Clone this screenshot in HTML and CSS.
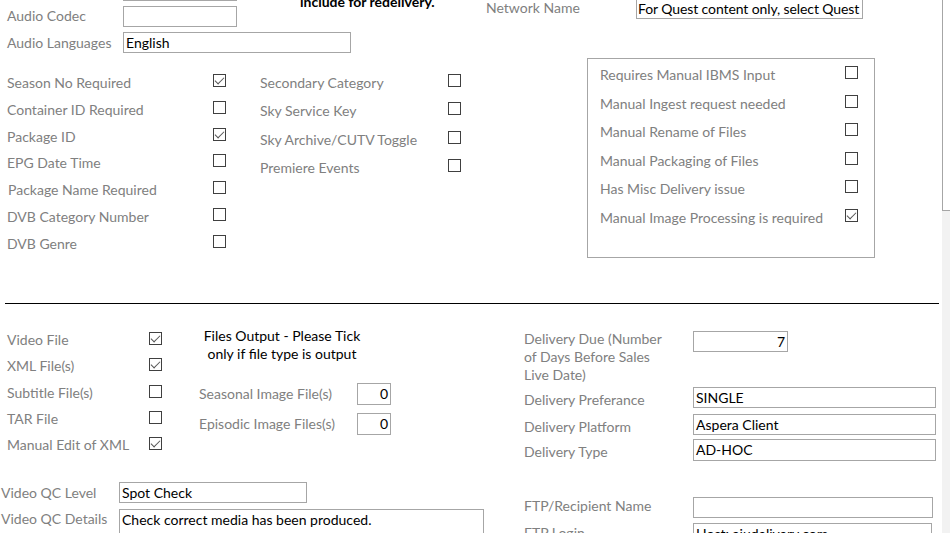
FILE: index.html
```html
<!DOCTYPE html>
<html lang="en">
<head>
    <meta charset="UTF-8">
    <title>Delivery Requirements</title>
    <link rel="stylesheet" href="styles.css">
</head>
<body>
    <div class="form">
        <div class="detail">
            <div class="head">
                <div class="audio">
                    <div class="field"><span class="lbl"></span><span class="box w114"></span></div>
                    <div class="field codec"><span class="lbl">Audio Codec</span><span class="box w114"></span></div>
                    <div class="field"><span class="lbl">Audio Languages</span><span class="box w228">English</span></div>
                </div>
                <p class="note">include for redelivery.</p>
                <div class="field network">
                    <span class="lbl">Network Name</span>
                    <span class="box">For Quest content only, select Quest</span>
                </div>
            </div>

            <div class="flags">
                <div class="checks left">
                    <div class="row"><span class="lbl">Season No Required</span><span class="check on"></span></div>
                    <div class="row"><span class="lbl">Container ID Required</span><span class="check"></span></div>
                    <div class="row"><span class="lbl">Package ID</span><span class="check on"></span></div>
                    <div class="row"><span class="lbl">EPG Date Time</span><span class="check"></span></div>
                    <div class="row"><span class="lbl shift">Package Name Required</span><span class="check"></span></div>
                    <div class="row"><span class="lbl">DVB Category Number</span><span class="check"></span></div>
                    <div class="row"><span class="lbl">DVB Genre</span><span class="check"></span></div>
                </div>
                <div class="checks mid">
                    <div class="row"><span class="lbl">Secondary Category</span><span class="check"></span></div>
                    <div class="row"><span class="lbl">Sky Service Key</span><span class="check"></span></div>
                    <div class="row"><span class="lbl">Sky Archive/CUTV Toggle</span><span class="check"></span></div>
                    <div class="row"><span class="lbl">Premiere Events</span><span class="check"></span></div>
                </div>
                <div class="manual">
                    <div class="row"><span class="lbl">Requires Manual IBMS Input</span><span class="check"></span></div>
                    <div class="row"><span class="lbl">Manual Ingest request needed</span><span class="check"></span></div>
                    <div class="row"><span class="lbl">Manual Rename of Files</span><span class="check"></span></div>
                    <div class="row"><span class="lbl">Manual Packaging of Files</span><span class="check"></span></div>
                    <div class="row"><span class="lbl">Has Misc Delivery issue</span><span class="check"></span></div>
                    <div class="row"><span class="lbl">Manual Image Processing is required</span><span class="check on"></span></div>
                </div>
            </div>

            <div class="rule"></div>

            <div class="output">
                <div class="files">
                    <div class="files-top">
                        <div class="checks types">
                            <div class="row"><span class="lbl">Video File</span><span class="check on"></span></div>
                            <div class="row"><span class="lbl">XML File(s)</span><span class="check on"></span></div>
                            <div class="row"><span class="lbl">Subtitle File(s)</span><span class="check"></span></div>
                            <div class="row"><span class="lbl">TAR File</span><span class="check"></span></div>
                            <div class="row"><span class="lbl">Manual Edit of XML</span><span class="check on"></span></div>
                        </div>
                        <div class="counts">
                            <p class="hint">Files Output - Please Tick<br>only if file type is output</p>
                            <div class="field count"><span class="lbl">Seasonal Image File(s)</span><span class="box">0</span></div>
                            <div class="field count"><span class="lbl">Episodic Image Files(s)</span><span class="box">0</span></div>
                        </div>
                    </div>
                    <div class="qc">
                        <div class="field qc-level"><span class="lbl">Video QC Level</span><span class="box">Spot Check</span></div>
                        <div class="field qc-details"><span class="lbl">Video QC Details</span><span class="box">Check correct media has been produced.</span></div>
                    </div>
                </div>

                <div class="delivery">
                    <div class="field due">
                        <span class="lbl">Delivery Due (Number<br>of Days Before Sales<br>Live Date)</span>
                        <span class="box">7</span>
                    </div>
                    <div class="field pref"><span class="lbl">Delivery Preferance</span><span class="box wide">SINGLE</span></div>
                    <div class="field platform"><span class="lbl">Delivery Platform</span><span class="box wide">Aspera Client</span></div>
                    <div class="field type"><span class="lbl">Delivery Type</span><span class="box wide">AD-HOC</span></div>
                    <div class="field ftp"><span class="lbl">FTP/Recipient Name</span><span class="box">&nbsp;</span></div>
                    <div class="field login"><span class="lbl">FTP Login</span><span class="box">Host: aiudelivery.com</span></div>
                </div>
            </div>
        </div>
        <div class="edge"><div class="edge-box"></div></div>
    </div>
</body>
</html>
```

FILE: styles.css
```css
* {
    margin: 0;
    padding: 0;
    box-sizing: border-box;
}

body {
    font-family: Lato, "Open Sans", sans-serif;
    font-size: 14px;
    color: #808080;
    background: #fff;
}

.form {
    display: flex;
    width: 950px;
    height: 533px;
    overflow: hidden;
}

.detail {
    width: 942px;
    flex: none;
}

.edge {
    flex: 1;
    background: #f2f2f2;
}

.edge-box {
    height: 211px;
    background: #fff;
    border-left: 1px solid #a6a6a6;
    border-bottom: 1px solid #a6a6a6;
}

/* labels, text boxes, check boxes */
.lbl {
    flex: none;
    line-height: 18px;
    white-space: nowrap;
}

.box {
    flex: none;
    display: block;
    height: 21px;
    padding: 0 2px;
    border: 1px solid #a6a6a6;
    background: #fff;
    color: #000;
    line-height: 19px;
    white-space: nowrap;
    overflow: hidden;
}

.field {
    display: flex;
    align-items: center;
}

.row {
    display: flex;
    align-items: flex-start;
}

.check {
    flex: none;
    position: relative;
    width: 13px;
    height: 13px;
    border: 1px solid #404040;
    background: #fff;
}

.check.on::after {
    content: "";
    position: absolute;
    left: 3px;
    top: 0;
    width: 4px;
    height: 8px;
    border-right: 1px solid #555;
    border-bottom: 1px solid #555;
    transform: rotate(45deg);
}

/* top strip */
.head {
    display: flex;
    align-items: flex-start;
    height: 58px;
}

.audio {
    flex: none;
    width: 300px;
    padding-left: 7px;
    margin-top: -20px;
    display: flex;
    flex-direction: column;
    gap: 5px;
}

.audio .lbl {
    width: 116px;
}

.codec .lbl {
    margin-top: -2px;
}

.w114 {
    width: 114px;
}

.w228 {
    width: 228px;
}

.note {
    flex: none;
    width: 186px;
    margin-top: -7px;
    font-weight: bold;
    color: #000;
    line-height: 18px;
}

.network {
    margin-top: -2px;
}

.network .lbl {
    width: 150px;
    margin-top: -1px;
}

.network .box {
    width: 227px;
    padding: 0 0 0 1px;
    letter-spacing: -0.1px;
}

/* flag check boxes */
.flags {
    display: flex;
    align-items: flex-start;
    height: 245px;
}

.checks {
    flex: none;
}

.left {
    margin: 16px 0 0 7px;
}

.left .row {
    height: 26.83px;
}

.left .lbl {
    width: 206px;
}

.left .shift {
    padding-left: 1px;
}

.mid {
    margin: 16px 0 0 34px;
}

.mid .row {
    height: 28.33px;
}

.mid .lbl {
    width: 188px;
}

.manual {
    flex: none;
    width: 288px;
    height: 200px;
    margin-left: 126px;
    padding: 7px 0 0 12px;
    border: 1px solid #a6a6a6;
}

.manual .row {
    height: 28.6px;
}

.manual .lbl {
    width: 245px;
}

.rule {
    height: 1px;
    margin: 0 3px 0 5px;
    background: #000;
}

/* file output + delivery */
.output {
    display: flex;
    align-items: flex-start;
}

.files {
    flex: none;
    width: 524px;
}

.files-top {
    display: flex;
    align-items: flex-start;
    height: 178px;
}

.types {
    margin: 27px 0 0 7px;
}

.types .row {
    height: 26.25px;
}

.types .lbl {
    width: 142px;
}

.types .check {
    margin-top: 1px;
}

.counts {
    margin-left: 37px;
}

.hint {
    width: 166px;
    margin-top: 23px;
    text-align: center;
    color: #000;
    line-height: 18px;
}

.count {
    margin-top: 20px;
}

.count + .count {
    margin-top: 8px;
}

.count .lbl {
    width: 158px;
}

.count .box {
    width: 34px;
    height: 22px;
    line-height: 20px;
    text-align: right;
}

.qc {
    display: flex;
    flex-direction: column;
    gap: 6px;
}

.qc .lbl {
    width: 119px;
    padding-left: 1px;
}

.qc-level .box {
    width: 188px;
}

.qc-details {
    align-items: flex-start;
}

.qc-details .lbl {
    margin-top: 1px;
}

.qc-details .box {
    width: 365px;
    height: 40px;
}

.delivery {
    margin-top: 26px;
    display: flex;
    flex-direction: column;
}

.delivery .field {
    align-items: flex-start;
}

.delivery .lbl {
    width: 169px;
    margin-top: 4px;
}

.delivery .wide {
    width: 243px;
}

.due .lbl {
    margin-top: 0;
}

.due .box {
    width: 95px;
    margin-top: 1px;
    text-align: right;
}

.pref {
    margin-top: 3px;
}

.platform {
    margin-top: 5px;
}

.type {
    margin-top: 3px;
}

.type .box {
    height: 22px;
}

.ftp {
    margin-top: 36px;
}

.ftp .lbl {
    margin-top: 0;
}

.ftp .box {
    width: 240px;
}

.login {
    margin-top: 5px;
}

.login .lbl {
    margin-top: 1px;
}

.login .box {
    width: 239px;
    height: 30px;
}
```
